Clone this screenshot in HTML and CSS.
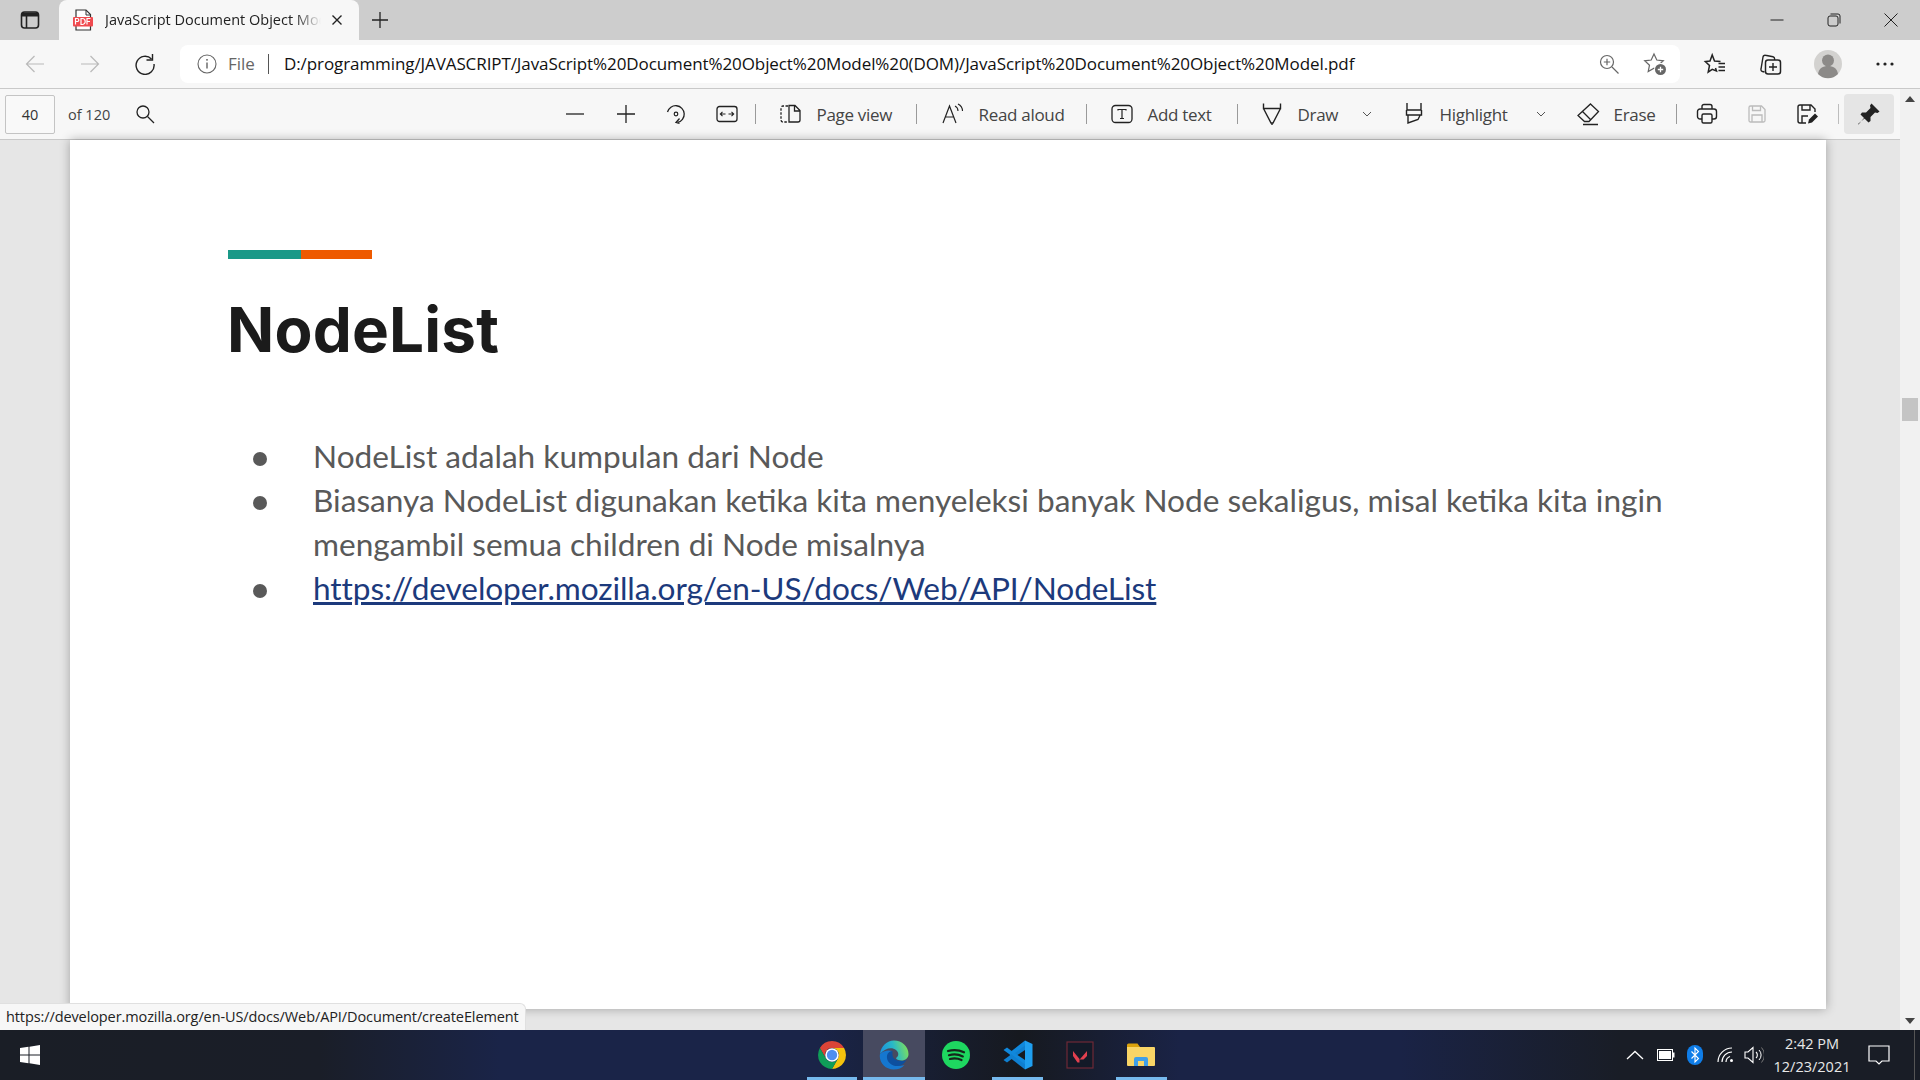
FILE: index.html
```html
<!DOCTYPE html>
<html lang="en">
<head>
<meta charset="utf-8">
<title>JavaScript Document Object Model</title>
<link rel="stylesheet" href="styles.css">
</head>
<body>
<div class="tabstrip">
  <div class="tab-side"><svg class="ic" width="20" height="20" viewBox="0 0 20 20"><rect x="1.5" y="2" width="17" height="16" rx="3" stroke-width="1.6"/><rect x="2" y="2.5" width="16" height="4" fill="#222" stroke="none"/><path d="M6.5 6v12" stroke-width="1.6"/></svg></div>
  <div class="tab">
    <svg class="favicon" width="20" height="22" viewBox="0 0 20 22"><path d="M3 1h10l4.5 4.500V21H3z" fill="#fff" stroke="#333" stroke-width="1.2"/><path d="M13 1v5h4.500" fill="none" stroke="#333"/><rect x="0" y="8" width="20" height="9.500" rx="1" fill="#f04a4f"/><path d="M2.500 15.500v-6h1.800a1.500 1.500 0 010 3H2.500M8 9.500v6h1.200a3 3 0 000-6zM14 15.500v-6h3.500M14 12.500h3" stroke="#fff" stroke-width="1.2" fill="none"/></svg>
    <span class="tab-title">JavaScript Document Object Model</span>
    <svg class="ic tab-close" width="12" height="12" viewBox="0 0 12 12"><path d="M1.500 1.500l9 9M10.500 1.500l-9 9" stroke-width="1.4"/></svg>
  </div>
  <svg class="ic new-tab" width="18" height="18" viewBox="0 0 18 18"><path d="M9 1v16M1 9h16" stroke-width="1.3"/></svg>
  <div class="win-controls">
    <svg class="ic" width="14" height="14" viewBox="0 0 14 14"><path d="M0.500 7h13" stroke-width="1"/></svg>
    <svg class="ic" width="14" height="14" viewBox="0 0 14 14"><rect x="1" y="3" width="10" height="10" rx="2" stroke-width="1"/><path d="M3.500 1h7.500a2 2 0 012 2v7.500" stroke-width="1"/></svg>
    <svg class="ic" width="14" height="14" viewBox="0 0 14 14"><path d="M0.500 0.500l13 13M13.500 0.500l-13 13" stroke-width="1"/></svg>
  </div>
</div>

<div class="navbar">
  <div class="nav-btn muted"><svg class="ic" width="20" height="20" viewBox="0 0 20 20"><path d="M19 10H1.500M9.500 2l-8 8 8 8" stroke-width="1.2"/></svg></div>
  <div class="nav-btn muted"><svg class="ic" width="20" height="20" viewBox="0 0 20 20"><path d="M1 10h17.500M10.500 2l8 8-8 8" stroke-width="1.2"/></svg></div>
  <div class="nav-btn"><svg class="ic" width="22" height="22" viewBox="0 0 22 22"><path d="M17.500 6A9 9 0 1020 11" stroke-width="1.4"/><path d="M18.500 1v6h-6" stroke-width="1.4"/></svg></div>
  <div class="addr">
    <svg class="ic addr-info" width="20" height="20" viewBox="0 0 20 20"><circle cx="10" cy="10" r="9" stroke="#666" stroke-width="1.1"/><path d="M10 8.500v6" stroke="#555" stroke-width="1.3"/><circle cx="10" cy="5.800" r="0.900" fill="#555" stroke="none"/></svg>
    <span class="addr-scheme">File</span>
    <span class="addr-sep"></span>
    <span class="addr-url">D:/programming/JAVASCRIPT/JavaScript%20Document%20Object%20Model%20(DOM)/JavaScript%20Document%20Object%20Model.pdf</span>
    <div class="addr-right">
      <svg class="ic grey" width="22" height="22" viewBox="0 0 22 22"><circle cx="9" cy="9" r="6.500" stroke-width="1.2"/><path d="M14 14l6.500 6.500M9 5.800v6.400M5.800 9h6.400" stroke-width="1.2"/></svg>
      <svg class="ic grey" width="24" height="24" viewBox="0 0 24 24"><path d="M11 2l2.800 6 6.500.8-4.800 4.400 1.300 6.400-5.800-3.300-5.800 3.300 1.300-6.400L1.700 8.800 8.200 8z" stroke-width="1.2"/><circle cx="17.500" cy="17.500" r="6.500" fill="#fff" stroke="none"/><circle cx="17.500" cy="17.500" r="5.500" fill="#666" stroke="none"/><path d="M17.500 14.800v5.400M14.800 17.500h5.400" stroke="#fff" stroke-width="1.3"/></svg>
    </div>
  </div>
  <div class="nav-right">
    <div class="nav-icon"><svg class="ic" width="24" height="24" viewBox="0 0 24 24"><path d="M16 9.500L10 9 7.700 3 5.500 9 0.800 9.500 5 13.500 3.700 20l4-2.700 4.300 1.700-1-3" stroke-width="1.5" transform="translate(1.500 0)"/><path d="M15.500 11.500h6.500M15.500 15h6.500M15.500 18.500h6.500" stroke-width="1.3"/></svg></div>
    <div class="nav-icon"><svg class="ic" width="24" height="24" viewBox="1.500 0 24 24"><path d="M6 20l-2-.5a2 2 0 01-1.500-2.500L4.500 5a2 2 0 012.400-1.700l7.600 1.400a2 2 0 011.600 2V8" stroke-width="1.4"/><rect x="7" y="8" width="15" height="14" rx="2.500" stroke-width="1.5"/><path d="M14.500 11v8M10.500 15h8" stroke-width="1.4"/></svg></div>
    <div class="nav-icon"><svg width="30" height="30" viewBox="0 0 30 30"><circle cx="15" cy="15" r="14" fill="#d3d2d0"/><circle cx="15" cy="11.500" r="6" fill="#8c8a88"/><path d="M5 25c1-6 5-8 10-8s9 2 10 8a14 14 0 01-20 0z" fill="#8c8a88"/></svg></div>
    <div class="nav-icon"><svg width="18" height="6" viewBox="0 0 18 6"><circle cx="2" cy="3" r="1.600" fill="#222"/><circle cx="9" cy="3" r="1.600" fill="#222"/><circle cx="16" cy="3" r="1.600" fill="#222"/></svg></div>
  </div>
</div>

<div class="workspace">
  <div class="viewer-col">
    <div class="pdfbar">
      <div class="page-input">40</div>
      <span class="page-total">of 120</span>
      <svg class="ic search" width="20" height="20" viewBox="0 0 20 20"><circle cx="8" cy="8" r="6" stroke-width="1.3"/><path d="M12.500 12.500l6.500 6.500" stroke-width="1.3"/></svg>
      <div class="tools">
        <div class="tool-sq"><svg class="ic" width="20" height="20" viewBox="0 0 20 20"><path d="M1 10h18" stroke-width="1.3"/></svg></div>
        <div class="tool-sq"><svg class="ic" width="20" height="20" viewBox="0 0 20 20"><path d="M10 1v18M1 10h18" stroke-width="1.3"/></svg></div>
        <div class="tool-sq"><svg class="ic" width="22" height="22" viewBox="0 0 22 22"><path d="M2.500 9A8.500 8.500 0 1112.500 19.500" stroke-width="1.3"/><path d="M15.500 16.500L12 20.500l3.500 1" stroke-width="1.3" transform="translate(-1 -1)"/><circle cx="11" cy="11" r="1.800" stroke-width="1.2"/></svg></div>
        <div class="tool-sq tool-sq-last"><svg class="ic" width="22" height="18" viewBox="0 0 22 18"><rect x="1" y="1.500" width="20" height="15" rx="2.500" stroke-width="1.3"/><path d="M4.500 9h5M6.500 6.800L4.300 9l2.200 2.200M12.500 9h5M15.500 6.800L17.700 9l-2.200 2.200" stroke-width="1.1"/></svg></div>
        <span class="tool-sep"></span>
        <div class="tool w-page">
          <svg class="ic tool-icon" width="24" height="22" viewBox="0 0 24 22"><path d="M9 3H4a2 2 0 00-2 2v12a2 2 0 002 2h5" stroke-width="1.3" stroke-dasharray="2.500 1.500"/><path d="M10 2.500h6l5 5V17a2 2 0 01-2 2h-9zM15.500 2.500V8H21" stroke-width="1.3"/></svg>
          <span>Page view</span>
        </div>
        <span class="tool-sep"></span>
        <div class="tool w-read">
          <svg class="ic tool-icon" width="24" height="24" viewBox="0 0 24 24"><path d="M2 21L8.500 4 15 21M4.500 15h8" stroke-width="1.2"/><path d="M14 4c2 1 3 3 3 5M17 2c3 1.500 4.500 4 4.500 7" stroke-width="1.1"/></svg>
          <span>Read aloud</span>
        </div>
        <span class="tool-sep"></span>
        <div class="tool w-add">
          <svg class="ic tool-icon" width="24" height="20" viewBox="0 0 24 20"><rect x="2" y="1.500" width="20" height="17" rx="3.500" stroke-width="1.3"/><path d="M8 6.500V5.500h8v1M12 5.500v9M10 14.500h4" stroke-width="1.2"/></svg>
          <span>Add text</span>
        </div>
        <span class="tool-sep"></span>
        <div class="tool w-draw">
          <svg class="ic tool-icon" width="24" height="24" viewBox="0 0 24 24"><path d="M3.500 1.500v5h17v-5M3.500 6.500L11 21h2l7.500-14.500M12 21v2" stroke-width="1.4"/></svg>
          <span>Draw</span>
          <svg class="ic chev" width="12" height="12" viewBox="0 0 12 12"><path d="M2 4l4 4 4-4" stroke-width="1"/></svg>
        </div>
        <div class="tool w-high">
          <svg class="ic tool-icon" width="24" height="24" viewBox="0 0 24 24"><path d="M5 1v7h14V1M4.500 8v5h15V8M6 13v8l10-3.500 2-4" stroke-width="1.4"/></svg>
          <span>Highlight</span>
          <svg class="ic chev" width="12" height="12" viewBox="0 0 12 12"><path d="M2 4l4 4 4-4" stroke-width="1"/></svg>
        </div>
        <div class="tool w-erase">
          <svg class="ic tool-icon" width="24" height="24" viewBox="0 0 24 24"><path d="M14.500 2l8 7.500L13 19.500H8.500L2 13.500zM6.500 9.500l8 8M7 22.500h15" stroke-width="1.3"/></svg>
          <span>Erase</span>
        </div>
        <span class="tool-sep"></span>
        <div class="tool-icons">
          <div class="tool-sq"><svg class="ic" width="22" height="22" viewBox="0 0 22 22"><path d="M6 6V3.500A2 2 0 018 1.500h6a2 2 0 012 2V6M6 16H4a2.500 2.500 0 01-2.500-2.500V8.500A2.500 2.500 0 014 6h14a2.500 2.500 0 012.500 2.500v5A2.500 2.500 0 0118 16h-2" stroke-width="1.4"/><rect x="6" y="11" width="10" height="9" rx="1.500" stroke-width="1.4"/></svg></div>
          <div class="tool-sq dim"><svg class="ic" width="20" height="20" viewBox="0 0 20 20"><path d="M2 3.500A1.500 1.500 0 013.500 2h11L18 5.500v11a1.500 1.500 0 01-1.500 1.500h-13A1.500 1.500 0 012 16.500zM5.500 2v4.500h8V2M5 18v-7h10v7" stroke-width="1.3"/></svg></div>
          <div class="tool-sq"><svg class="ic" width="22" height="22" viewBox="0 0 22 22"><path d="M10 20H4a2 2 0 01-2-2V4a2 2 0 012-2h11l4 4v3M6 2v5h8V2M6 20v-7h6" stroke-width="1.4"/><path d="M12 20.500l1-4 6-6 3 3-6 6z" fill="#222" stroke="none"/></svg></div>
        </div>
        <span class="tool-sep thin"></span>
        <div class="pin"><svg width="24" height="24" viewBox="0 0 24 24"><path d="M14.500 1.500L22.500 9.500 20.500 11 18 10.500 13.500 15 13.500 19 11.500 20.500 7 16 1.500 22.500 1 22 7.500 16.500 3.500 12.500 5 10.500 9 10.500 13.500 6 13 3.500z" fill="#222"/></svg></div>
      </div>
    </div>

    <div class="viewer">
      <article class="page">
        <div class="accent"><span class="accent-teal"></span><span class="accent-orange"></span></div>
        <h1>NodeList</h1>
        <ul class="points">
          <li>NodeList adalah kumpulan dari Node</li>
          <li>Biasanya NodeList digunakan ketika kita menyeleksi banyak Node sekaligus, misal ketika kita ingin mengambil semua children di Node misalnya</li>
          <li><a href="#">https://developer.mozilla.org/en-US/docs/Web/API/NodeList</a></li>
        </ul>
      </article>
      <div class="status">https://developer.mozilla.org/en-US/docs/Web/API/Document/createElement</div>
    </div>
  </div>
  <div class="scrollbar">
    <span class="arrow-up"></span>
    <span class="thumb"></span>
    <span class="arrow-down"></span>
  </div>
</div>

<footer class="taskbar">
  <svg class="start" width="20" height="20" viewBox="0 0 20 20"><path d="M0 3l8.500-1.200V9.500H0zM9.500 1.700L20 0v9.500H9.500zM0 10.500h8.500v7.700L0 17zM9.500 10.500H20V20L9.500 18.300z" fill="#fff"/></svg>
  <div class="apps">
    <div class="app open"><svg width="28" height="28" viewBox="0 0 28 28"><path d="M14 0A14 14 0 0126.100 7H14a7 7 0 00-6.100 10.500L1.900 7A14 14 0 0114 0z" fill="#db4437"/><path d="M26.100 7A14 14 0 0114 28l6-10.500A7 7 0 0014 7z" fill="#f4c20d"/><path d="M1.900 7A14 14 0 0014 28l6-10.500a7 7 0 01-12.100 0z" fill="#0f9d58"/><circle cx="14" cy="14" r="6.800" fill="#fff"/><circle cx="14" cy="14" r="5.200" fill="#4f8ef0"/></svg></div>
    <div class="app open active"><svg width="30" height="30" viewBox="0 0 30 30"><defs><linearGradient id="eg1" x1="0" y1="0.600" x2="1" y2="0.400"><stop offset="0" stop-color="#1a8fe0"/><stop offset="0.500" stop-color="#28b8c8"/><stop offset="1" stop-color="#7fe05a"/></linearGradient></defs><path d="M1 14C2 6 8 0.500 15 0.500c8 0 14.500 6 14.500 13.500 0 4-3 6.500-7 6.500-3 0-5.500-1-5.500-2.500 3-2 3-5.500 0-8C13 7 6 8 1 14z" fill="url(#eg1)"/><path d="M1 14c-1.500 8 5 15.500 13.500 15.500 5 0 8.500-1.500 11-4.500-3 1-7 1-10-.5C11 22.500 8 18 10 14c.8-1.500 2-2.500 3.500-3C8.500 9.500 4 11 1 14z" fill="#1577cf"/><path d="M13.500 11c-3.500 0-6 3-5.500 7 .5 5 6 8.500 11 8 3.500-.4 6.500-2.500 8.500-6-2 1-3.500 1-5 1-3 0-7-1-8.500-4-.8-2-.5-4.500-.5-6z" fill="#0d4f9e"/></svg></div>
    <div class="app"><svg width="28" height="28" viewBox="0 0 28 28"><circle cx="14" cy="14" r="14" fill="#1ed760"/><path d="M6 10c5.500-1.600 11-1.200 16 1.300M7 14.200c4.800-1.300 9.500-.9 13.800 1.200M8 18c4-1 8-.7 11.500 1" fill="none" stroke="#15261b" stroke-width="2.2" stroke-linecap="round"/></svg></div>
    <div class="app open"><svg width="30" height="30" viewBox="0 0 30 30"><path d="M22 0.500L29.500 4v22L22 29.500z" fill="#1f9ff0"/><path d="M22 4.500v5.500L8 19.500l-4 3-3.500-2.500z" fill="#0f7fd0"/><path d="M22 25.500V20L8 10.500l-4-3L0.500 10z" fill="#1088dc"/><path d="M22 0.500v5L8 16l-2-3z" fill="#1088dc"/><path d="M22 29.500v-5L8 14l-2 3z" fill="#0f7fd0"/></svg></div>
    <div class="app"><svg width="28" height="28" viewBox="0 0 28 28"><rect x="1" y="1" width="26" height="26" fill="#131a28" stroke="#6e2936" stroke-width="1.2"/><path d="M7 10l6.500 8v3.500h-2L7 15zM21 10v5l-3.500 3.500h-3.800z" fill="#e2404f"/></svg></div>
    <div class="app open"><svg width="28" height="24" viewBox="0 0 28 24"><path d="M0 2a1.500 1.500 0 011.500-1.500h9L13 4H0z" fill="#dba20c"/><path d="M0 4h27a1 1 0 011 1v17a1 1 0 01-1 1H1a1 1 0 01-1-1z" fill="#f9d566"/><path d="M7 23v-7a2 2 0 012-2h10a2 2 0 012 2v7h-4v-5h-6v5z" fill="#3f9fe8"/></svg></div>
  </div>
  <div class="tray">
    <svg class="ic light tray-chev" width="18" height="10" viewBox="0 0 18 10"><path d="M1 9l8-7.500L17 9" stroke-width="1.3"/></svg>
    <svg class="ic light tray-bat" width="20" height="14" viewBox="0 0 20 14"><rect x="2.500" y="1.500" width="15" height="11" stroke-width="1"/><rect x="4" y="3" width="12" height="8" fill="#fff" stroke="none"/><rect x="18" y="4.500" width="1.500" height="5" fill="#fff" stroke="none"/></svg>
    <svg class="tray-bt" width="16" height="20" viewBox="0 0 16 20"><rect width="16" height="20" rx="8" fill="#0f7de8"/><path d="M4.500 6.500l7 7L8 17V3l3.500 3.500-7 7" fill="none" stroke="#fff" stroke-width="1.1"/></svg>
    <svg class="ic light tray-wifi" width="18" height="16" viewBox="0 0 18 16"><path d="M1 15A14 14 0 0115 1M5 15A10 10 0 0115 5" stroke-width="1.2"/><path d="M9 15a6 6 0 014-5.500" stroke-width="1.2"/><circle cx="14.500" cy="13.500" r="1.500" fill="#fff" stroke="none"/></svg>
    <svg class="ic light tray-vol" width="20" height="18" viewBox="0 0 20 18"><path d="M1 6h3l5-4.500v15L4 12H1z" stroke-width="1.1"/><path d="M12 6a4 4 0 010 6" stroke-width="1.1"/><path d="M15 4a7 7 0 010 10" stroke-width="1"/><path d="M17.500 1.500a11 11 0 010 15" stroke="#777" stroke-width="1"/></svg>
    <div class="clock"><span>2:42 PM</span><span>12/23/2021</span></div>
    <svg class="ic light notif" width="22" height="20" viewBox="0 0 22 20"><path d="M1 1h20v15h-7l-3 3-3-3H1z" stroke-width="1.2"/></svg>
    <span class="show-desktop"></span>
  </div>
</footer>
</body>
</html>
```

FILE: styles.css
```css
* { box-sizing: border-box; }
html, body { margin: 0; padding: 0; }
body {
  width: 1920px;
  height: 1080px;
  overflow: hidden;
  display: flex;
  flex-direction: column;
  font-family: "Open Sans", "Noto Sans", sans-serif;
  color: #222;
  background: #f7f7f7;
}
.ic { fill: none; stroke: #222; display: block; }
.ic.grey { stroke: #666; }
.ic.light { stroke: #fff; }

/* tab strip */
.tabstrip { height: 40px; flex: none; background: #cdcdcd; display: flex; align-items: flex-end; position: relative; }
.tab-side { width: 59px; height: 40px; display: flex; align-items: center; justify-content: center; }
.tab { width: 300px; height: 40px; background: #f7f7f7; border-radius: 8px 8px 0 0; display: flex; align-items: center; padding-left: 14px; position: relative; }
.favicon { flex: none; }
.tab-title { margin-left: 12px; width: 216px; height: 24px; line-height: 24px; overflow: hidden; white-space: nowrap; font-size: 14.5px; color: #222;
  -webkit-mask-image: linear-gradient(to right, #000 190px, transparent 216px); mask-image: linear-gradient(to right, #000 190px, transparent 216px); }
.tab-close { margin-left: 10px; }
.new-tab { margin: 0 0 11px 12px; }
.win-controls { margin-left: auto; height: 40px; width: 150px; display: flex; align-items: center; gap: 43px; }

/* nav */
.navbar { height: 49px; flex: none; display: flex; align-items: flex-start; padding: 5px 0 0 7.5px; background: #f7f7f7; border-bottom: 1px solid #c9c9c9; }
.nav-btn { width: 55px; height: 38px; display: flex; align-items: center; justify-content: center; }
.nav-btn.muted .ic { stroke: #b9b9b9; }
.addr { margin-left: 7.5px; width: 1500px; height: 38px; background: #fff; border-radius: 8px; display: flex; align-items: center; padding-left: 17px; position: relative; }
.addr-scheme { margin-left: 11px; margin-bottom: 2px; width: 29px; font-size: 17px; color: #666; white-space: nowrap; }
.addr-sep { width: 1px; height: 20px; background: #555; margin: 0 15px 0 11px; }
.addr-url { margin-bottom: 2px; font-size: 17px; color: #111; white-space: nowrap; letter-spacing: -0.09px; }
.addr-right { margin-left: auto; width: 82px; display: flex; align-items: center; gap: 23px; }
.nav-right { display: flex; margin-left: 7px; }
.nav-icon { width: 56.5px; height: 38px; display: flex; align-items: center; justify-content: center; }

/* pdf toolbar + viewer */
.workspace { flex: 1; display: flex; min-height: 0; }
.viewer-col { width: 1900px; display: flex; flex-direction: column; position: relative; }
.pdfbar { height: 51px; flex: none; background: #f7f7f7; border-bottom: 1px solid #c9c9c9; display: flex; align-items: center; padding-left: 5px; }
.page-input { width: 50px; height: 39px; border: 1px solid #c4c4c4; border-radius: 2px; background: #f9f9f9; display: flex; align-items: center; justify-content: center; font-size: 14.5px; color: #333; }
.page-total { margin-left: 13px; font-size: 14.5px; color: #444; width: 42px; white-space: nowrap; }
.search { margin-left: 25px; }
.tools { margin-left: auto; display: flex; align-items: center; }
.tool-sq { width: 50.5px; height: 40px; display: flex; align-items: center; justify-content: center; }
.tool-sq-last { margin-right: 3px; }
.tool-sq.dim .ic { stroke: #bcbcbc; }
.tool-icons { display: flex; margin-left: 5px; }
.tool-icons .tool-sq { width: 50px; }
.tool-sep { width: 1px; height: 20px; background: #9a9a9a; flex: none; }
.tool-sep.thin { background: #bdbdbd; margin-left: 6px; }
.tool { height: 40px; display: flex; align-items: center; font-size: 17px; color: #444; white-space: nowrap; letter-spacing: -0.3px; }
.tool-icon { flex: none; margin-right: 13.5px; }
.chev { margin-left: auto; margin-right: 6px; stroke: #555; }
.w-page { width: 160px; padding-left: 23px; }
.w-read { width: 169px; padding-left: 24px; }
.w-add { width: 150px; padding-left: 23px; }
.w-draw { width: 152px; padding: 0 11px 0 22px; }
.w-high { width: 175px; padding: 0 12px; }
.w-erase { width: 111px; padding-left: 11px; }
.pin { width: 50px; height: 40px; margin: 0 6px 0 5px; background: #e5e5e5; border-radius: 4px; display: flex; align-items: center; justify-content: center; }

.viewer { flex: 1; background: #e6e6e6; position: relative; padding-left: 70px; min-height: 0; }
.page { width: 1756px; height: 869px; background: #fff; box-shadow: 0 0 10px rgba(0,0,0,.3); padding: 110px 150px 0 158px; color: #595959; }
.accent { display: flex; height: 9px; }
.accent-teal { width: 73px; background: #1a9988; }
.accent-orange { width: 71px; background: #ee5a00; }
h1 { margin: 31px 0 0 -1px; font-family: Inter, "Liberation Sans", sans-serif; font-weight: 700; font-size: 62px; line-height: 80px; color: #1b1b1b; letter-spacing: 0.2px; }
.points { list-style: none; margin: 64px 0 0; padding: 0; font-family: Lato, "Noto Sans", sans-serif; font-size: 31.6px; line-height: 44px; }
.points li { display: flex; }
.points li::before { content: ""; flex: none; width: 14px; height: 14px; border-radius: 50%; background: #595959; margin: 18px 46px 0 25px; }
.points a { color: #1c3a7c; text-decoration: underline; letter-spacing: -0.09px; }
.status { position: absolute; left: 0; bottom: 0; height: 27px; width: 526px; background: #f7f7f7; border: 1px solid #e0e0e0; border-width: 1px 1px 0 0; border-radius: 0 6px 0 0; padding-left: 6px; font-size: 14.5px; letter-spacing: -0.1px; line-height: 26px; color: #222; white-space: nowrap; overflow: hidden; }

.scrollbar { width: 20px; background: #f1f1f1; display: flex; flex-direction: column; align-items: center; padding-top: 7px; }
.arrow-up { width: 0; height: 0; border: 5px solid transparent; border-top: 0; border-bottom: 6px solid #444; }
.thumb { width: 16px; height: 23px; background: #c4c4c4; margin-top: 296px; }
.arrow-down { width: 0; height: 0; border: 5px solid transparent; border-bottom: 0; border-top: 6px solid #444; margin-top: auto; margin-bottom: 6px; }

/* taskbar */
.taskbar { height: 50px; flex: none; display: flex; align-items: center; color: #fff;
  background: linear-gradient(to right, #1a1e26 0, #1a1e28 320px, #1a2448 500px, #1a2448 820px, #16191f 1020px, #1a2346 1180px, #1a2346 1400px, #191d26 1620px, #191d26 100%); }
.start { margin-left: 20px; flex: none; }
.apps { display: flex; margin-left: 761px; height: 50px; }
.app { width: 61.9px; height: 50px; display: flex; align-items: center; justify-content: center; position: relative; }
.app.active { background: #474a60; }
.app.open::after { content: ""; position: absolute; left: 5.5px; right: 5.5px; bottom: 0; height: 3px; background: #76b9ed; }
.app.active::after { left: 0; right: 0; }
.tray { margin-left: auto; display: flex; align-items: center; height: 50px; }
.tray-bat { margin-left: 11px; }
.tray-bt { margin-left: 12px; }
.tray-wifi { margin-left: 14px; }
.tray-vol { margin-left: 9px; }
.clock { width: 94px; margin-left: 1px; display: flex; flex-direction: column; align-items: center; font-size: 14.5px; line-height: 23px; color: #e8e8e8; white-space: nowrap; }
.notif { margin-left: 9px; }
.show-desktop { width: 1px; height: 50px; background: #555; margin-left: 24px; margin-right: 5px; }
```
